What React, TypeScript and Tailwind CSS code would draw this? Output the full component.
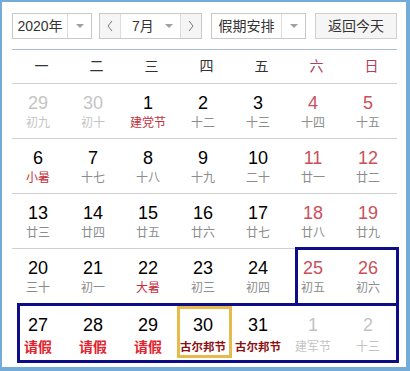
import React from "react";

type Cell = {
  n: string;
  l: string;
  kind?: "other" | "weekend" | "fest" | "leave" | "gu";
};

const rows: Cell[][] = [
  [
    { n: "29", l: "初九", kind: "other" },
    { n: "30", l: "初十", kind: "other" },
    { n: "1", l: "建党节", kind: "fest" },
    { n: "2", l: "十二" },
    { n: "3", l: "十三" },
    { n: "4", l: "十四", kind: "weekend" },
    { n: "5", l: "十五", kind: "weekend" },
  ],
  [
    { n: "6", l: "小暑", kind: "fest" },
    { n: "7", l: "十七" },
    { n: "8", l: "十八" },
    { n: "9", l: "十九" },
    { n: "10", l: "二十" },
    { n: "11", l: "廿一", kind: "weekend" },
    { n: "12", l: "廿二", kind: "weekend" },
  ],
  [
    { n: "13", l: "廿三" },
    { n: "14", l: "廿四" },
    { n: "15", l: "廿五" },
    { n: "16", l: "廿六" },
    { n: "17", l: "廿七" },
    { n: "18", l: "廿八", kind: "weekend" },
    { n: "19", l: "廿九", kind: "weekend" },
  ],
  [
    { n: "20", l: "三十" },
    { n: "21", l: "初一" },
    { n: "22", l: "大暑", kind: "fest" },
    { n: "23", l: "初三" },
    { n: "24", l: "初四" },
    { n: "25", l: "初五", kind: "weekend" },
    { n: "26", l: "初六", kind: "weekend" },
  ],
];

const lastRow: Cell[] = [
  { n: "27", l: "请假", kind: "leave" },
  { n: "28", l: "请假", kind: "leave" },
  { n: "29", l: "请假", kind: "leave" },
  { n: "30", l: "古尔邦节", kind: "gu" },
  { n: "31", l: "古尔邦节", kind: "gu" },
  { n: "1", l: "建军节", kind: "other" },
  { n: "2", l: "十三", kind: "other" },
];

const font = { fontFamily: "'Liberation Sans', 'Noto Sans CJK SC', sans-serif" };

function Arrow() {
  return (
    <span className="inline-block w-0 h-0 border-l-[4px] border-r-[4px] border-t-[4px] border-l-transparent border-r-transparent border-t-[#a0a0a0]" />
  );
}

function Chevron({ dir }: { dir: "l" | "r" }) {
  return (
    <svg width="8" height="12" viewBox="0 0 8 12">
      <polyline
        points={dir === "l" ? "6,1 2,6 6,11" : "2,1 6,6 2,11"}
        fill="none"
        stroke="#777"
        strokeWidth="1"
      />
    </svg>
  );
}

function numColor(c: Cell) {
  if (c.kind === "other") return "text-[#c4c4c4]";
  if (c.kind === "weekend") return "text-[#c9505a]";
  return "text-black";
}

function lunarColor(c: Cell) {
  if (c.kind === "other") return "text-[#c4c4c4]";
  if (c.kind === "fest") return "text-[#c4303c]";
  return "text-[#8c8c8c]";
}

export default function App() {
  return (
    <div
      className="relative w-[410px] h-[371px] bg-white border-l-2 border-t-2 border-r-[4px] border-b-[4px] border-[#74acd9] overflow-hidden"
      style={font}
    >
      <div className="pl-[10px] pt-[11px]">
        {/* Controls */}
        <div className="flex h-[26px] text-[14px] text-[#333]">
          <div className="flex w-[80px] border border-[#c8c8c8]">
            <div className="flex-1 flex items-center justify-center">2020年</div>
            <div className="w-[24px] border-l border-[#dcdcdc] flex items-center justify-center">
              <Arrow />
            </div>
          </div>
          <div className="flex w-[103px] ml-[7px] border border-[#c8c8c8]">
            <div className="w-[21px] bg-[#f5f5f5] border-r border-[#dcdcdc] flex items-center justify-center">
              <Chevron dir="l" />
            </div>
            <div className="flex-1 flex items-center pl-[11px]">
              <span>7月</span>
              <span className="ml-[11px] flex items-center">
                <Arrow />
              </span>
            </div>
            <div className="w-[21px] bg-[#f5f5f5] border-l border-[#dcdcdc] flex items-center justify-center">
              <Chevron dir="r" />
            </div>
          </div>
          <div className="flex w-[95px] ml-[9px] border border-[#c8c8c8]">
            <div className="flex-1 flex items-center justify-center">假期安排</div>
            <div className="w-[24px] border-l border-[#dcdcdc] flex items-center justify-center">
              <Arrow />
            </div>
          </div>
          <div className="w-[82px] ml-[9px] border border-[#cfcfcf] bg-[#f5f5f5] flex items-center justify-center">
            返回今天
          </div>
        </div>

        {/* Weekday header */}
        <div className="w-[385px] mt-[10px] border-t border-b border-t-[#a9bccf] border-b-[#d0d0d0] h-[35px] grid grid-cols-7 text-[14px] items-center">
          {["一", "二", "三", "四", "五", "六", "日"].map((d, i) => (
            <div
              key={d}
              className={`text-center pl-[4px] ${i >= 5 ? "text-[#b04058]" : "text-[#333]"}`}
            >
              {d}
            </div>
          ))}
        </div>

        {/* Rows */}
        {rows.map((r, ri) => (
          <div
            key={ri}
            className={`w-[385px] h-[55px] grid grid-cols-7 ${ri < 3 ? "border-b border-[#d0d0d0]" : ""}`}
          >
            {r.map((c, ci) => (
              <div key={ci} className="flex flex-col items-center pt-[9px] pr-[3px]">
                <div className={`text-[18px] leading-[20px] ${numColor(c)}`}>{c.n}</div>
                <div className={`text-[12px] leading-[14px] mt-[3px] ${lunarColor(c)}`}>{c.l}</div>
              </div>
            ))}
          </div>
        ))}

        <div className="w-[385px] h-[55px] grid grid-cols-7">
          {lastRow.map((c, ci) => (
            <div key={ci} className="flex flex-col items-center pt-[11px] pr-[3px]">
              <div className={`text-[18px] leading-[20px] ${numColor(c)}`}>{c.n}</div>
              <div
                className={
                  c.kind === "leave"
                    ? "text-[14px] leading-[16px] mt-[4px] font-bold text-[#e3222c]"
                    : c.kind === "gu"
                    ? "text-[11.5px] leading-[16px] mt-[4px] font-bold text-[#8a1212] whitespace-nowrap"
                    : "text-[12px] leading-[16px] mt-[4px] text-[#c4c4c4]"
                }
              >
                {c.l}
              </div>
            </div>
          ))}
        </div>
      </div>

      {/* Highlight boxes */}
      <div className="absolute left-[293px] top-[245px] w-[104px] h-[59px] border-[3px] border-[#0d0d88]" />
      <div className="absolute left-[15px] top-[301px] w-[382px] h-[60px] border-[3px] border-[#0d0d88]" />
      <div className="absolute left-[175px] top-[304px] w-[55px] h-[52px] border-[3px] border-[#e6bb4c]" />
    </div>
  );
}
